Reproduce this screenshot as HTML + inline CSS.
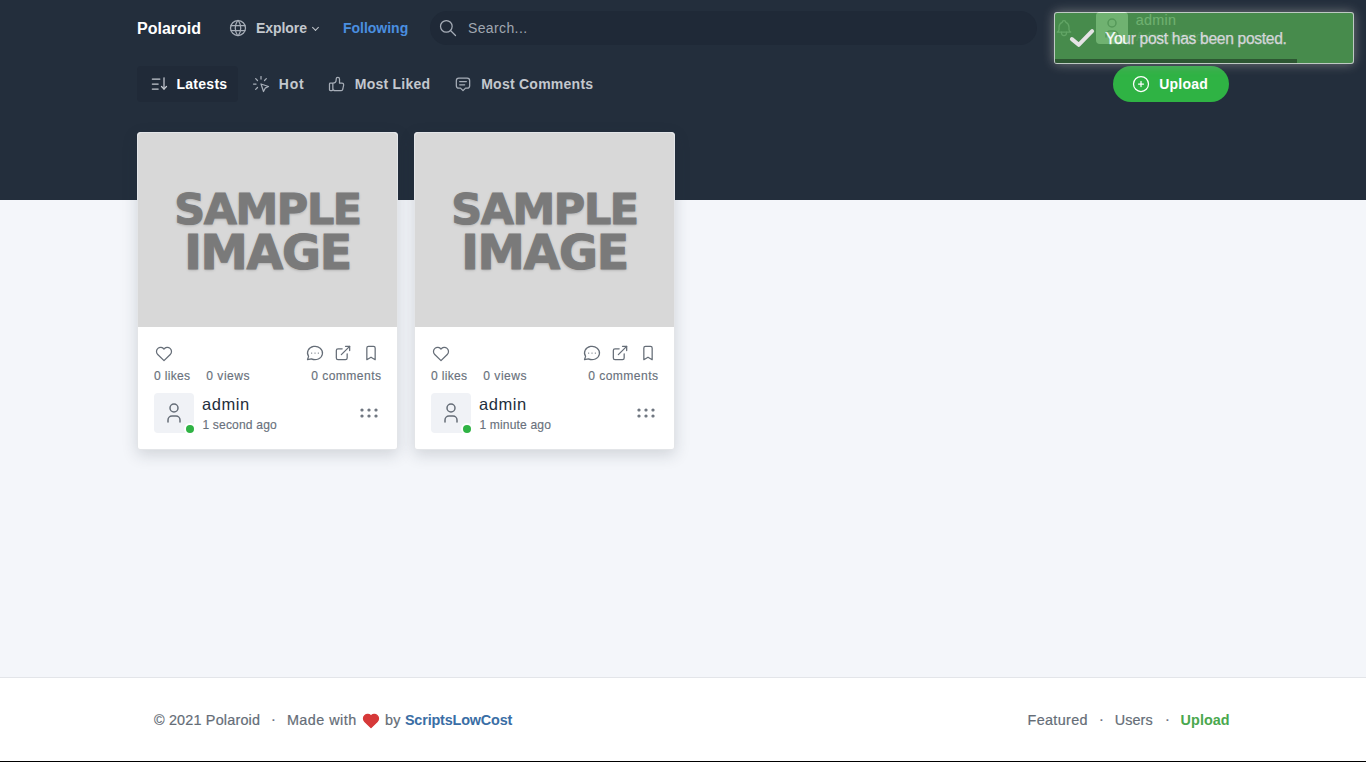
<!DOCTYPE html>
<html lang="en">
<head>
<meta charset="utf-8">
<title>Polaroid</title>
<style>
*{box-sizing:border-box;margin:0;padding:0}
html,body{width:1366px;height:762px;overflow:hidden}
body{position:relative;background:#f4f6fa;font-family:"Liberation Sans",Arial,sans-serif;font-size:14px;color:#232e3c;-webkit-font-smoothing:antialiased}
a{text-decoration:none;color:inherit}
.abs{position:absolute}
.t{position:absolute;white-space:nowrap;line-height:1}
svg.ic{position:absolute;fill:none;stroke:currentColor;stroke-width:1.5;stroke-linecap:round;stroke-linejoin:round}
.hdr{position:absolute;left:0;top:0;width:1366px;height:200px;background:#232e3c}
.nav-t{font-weight:700;font-size:14px;color:#c3c8ce}
.search{position:absolute;left:430px;top:11px;width:607px;height:34px;border-radius:17px;background:#1f2937}
.active-bg{position:absolute;left:137px;top:66px;width:101px;height:36px;border-radius:4px;background:#202a38}
.upload-btn{position:absolute;left:1113px;top:66px;width:116px;height:36px;border-radius:18px;background:#2fb344;color:#fff}
.card{position:absolute;top:132px;width:261px;height:318px;background:#fff;border:1px solid #e3e5e8;border-radius:3px;box-shadow:0 5px 15px rgba(35,46,60,.17);color:#656d77}
.card .img{position:absolute;left:0;top:0;width:259px;height:194px;background:#d8d8d8;border-radius:3px 3px 0 0;overflow:hidden}
.smp{position:absolute;left:0;width:259px;text-align:center;font-family:"DejaVu Sans","Liberation Sans",sans-serif;font-weight:700;line-height:1;color:#7a7a7a;-webkit-text-stroke:1px #7a7a7a;text-shadow:0 1px 3px rgba(0,0,0,.25);white-space:nowrap}
.s1{font-size:42.9px;letter-spacing:-1.4px;top:55px}
.s2{font-size:47.5px;letter-spacing:-1.3px;top:96px}
.sm{font-size:12.1px;color:#69717c;-webkit-text-stroke:.15px}
.avatar{position:absolute;width:40px;height:40px;border-radius:4px;background:#f0f2f6;color:#656d77}
.dot{position:absolute;right:0;bottom:0;width:8px;height:8px;border-radius:50%;background:#2fb344;box-shadow:0 0 0 2px #fff}
.footer{position:absolute;left:0;top:677px;width:1366px;height:84px;background:#fff;border-top:1px solid #e3e5e9;color:#656d77;font-size:14.4px;-webkit-text-stroke:.2px}
.blackline{position:absolute;left:0;top:761px;width:1366px;height:1px;background:#000}
.toast{position:absolute;left:1054px;top:12px;width:300px;height:52px;border-radius:3px;background:#51a351;opacity:.8;box-shadow:0 0 12px rgba(153,153,153,.88);border:1px solid rgba(255,255,255,.85);color:#fff}
.toast .prog{position:absolute;left:0;bottom:0;height:4px;width:241.7px;background:#000;opacity:.4}
/*FIT*/
#brand{letter-spacing:0.00px;margin-left:-0.0px}
#explore{letter-spacing:-0.05px;margin-left:-0.1px}
#following{letter-spacing:0.00px;margin-left:-0.1px}
#searchph{letter-spacing:0.39px;margin-left:-0.1px}
#latests{letter-spacing:0.28px;margin-left:-0.6px}
#hot{letter-spacing:0.73px;margin-left:-0.2px}
#mliked{letter-spacing:0.23px;margin-left:-0.2px}
#mcomm{letter-spacing:0.25px;margin-left:0.2px}
#uploadt{letter-spacing:0.19px;margin-left:0.3px}
#c1 .likes{letter-spacing:0.29px;margin-left:0.1px}
#c1 .views{letter-spacing:0.49px;margin-left:0.3px}
#c1 .comms{letter-spacing:0.42px;margin-left:-0.7px}
#c1 .cname{letter-spacing:0.54px;margin-left:0.0px}
#c1 .ago{letter-spacing:0.16px;margin-left:0.4px}
#c2 .likes{letter-spacing:0.29px;margin-left:0.1px}
#c2 .views{letter-spacing:0.49px;margin-left:0.3px}
#c2 .comms{letter-spacing:0.42px;margin-left:-0.7px}
#c2 .cname{letter-spacing:0.55px;margin-left:0.0px}
#c2 .ago{letter-spacing:0.14px;margin-left:0.4px}
#f1{letter-spacing:0.19px;margin-left:-0.1px}
#f2{letter-spacing:0.46px;margin-left:-1.1px}
#f3{letter-spacing:0.39px;margin-left:-0.1px}
#f4{letter-spacing:-0.16px;margin-left:-0.1px}
#f5{letter-spacing:0.34px;margin-left:-0.5px}
#f6{letter-spacing:0.07px;margin-left:-0.2px}
#f7{letter-spacing:0.05px;margin-left:-0.4px}
#uname{letter-spacing:0.25px;margin-left:-0.3px}
/*ENDFIT*/
</style>
</head>
<body>

<!-- ===== dark header ===== -->
<header class="hdr">
  <a class="t" id="brand" style="left:137px;top:21px;font-size:16px;font-weight:700;color:#fff">Polaroid</a>

  <svg class="ic" style="left:228px;top:18px;color:#a7aeb8" width="20" height="20" viewBox="0 0 24 24"><circle cx="12" cy="12" r="9"/><path d="M3.6 9h16.8"/><path d="M3.6 15h16.8"/><path d="M11.5 3a17 17 0 0 0 0 18"/><path d="M12.5 3a17 17 0 0 1 0 18"/></svg>
  <a class="t nav-t" id="explore" style="left:256px;top:21px">Explore</a>
  <span class="abs" style="left:313px;top:25px;width:5px;height:5px;border-left:1px solid #c3c8ce;border-bottom:1px solid #c3c8ce;transform:rotate(-45deg)"></span>
  <a class="t nav-t" id="following" style="left:343px;top:21px;color:#4a8fe0">Following</a>

  <div class="search">
    <svg class="ic" style="left:8px;top:7px;color:#a6adb7" width="20" height="20" viewBox="0 0 24 24"><circle cx="10" cy="10" r="7"/><path d="M21 21l-6 -6"/></svg>
    <span class="t" id="searchph" style="left:38px;top:10px;font-size:14px;color:#a0a7b1">Search...</span>
  </div>

  <!-- right: bell, avatar, user -->
  <svg class="ic" style="left:1054px;top:17.5px;color:#a7aeb8" width="20" height="20" viewBox="0 0 24 24"><path d="M10 5a2 2 0 0 1 4 0a7 7 0 0 1 4 6v3a4 4 0 0 0 2 3h-16a4 4 0 0 0 2 -3v-3a7 7 0 0 1 4 -6"/><path d="M9 17v1a3 3 0 0 0 6 0v-1"/></svg>
  <div class="avatar" style="left:1096px;top:12px;width:32px;height:32px;background:#f0f2f6">
    <svg class="ic" style="left:4px;top:4px" width="24" height="24" viewBox="0 0 24 24"><circle cx="12" cy="7" r="4"/><path d="M6 21v-2a4 4 0 0 1 4 -4h4a4 4 0 0 1 4 4v2"/></svg>
  </div>
  <span class="t" id="uname" style="left:1136px;top:12.7px;font-size:14.4px;color:#e8eaed">admin</span>
  <span class="t" id="urole" style="left:1136px;top:31px;font-size:12px;color:#6c7683">Administrator</span>

  <!-- sub nav -->
  <div class="active-bg"></div>
  <svg class="ic" style="left:149px;top:74px;color:#c4c9d0" width="20" height="20" viewBox="0 0 24 24"><path d="M4 6l9 0"/><path d="M4 12l7 0"/><path d="M4 18l7 0"/><path d="M15 15l3 3l3 -3"/><path d="M18 4.500l0 13.500"/></svg>
  <a class="t nav-t" id="latests" style="left:177px;top:77px;color:#fff">Latests</a>

  <svg class="ic" style="left:251px;top:74px;color:#a7aeb8" width="20" height="20" viewBox="0 0 24 24"><path d="M3 12l3 0"/><path d="M12 3l0 3"/><path d="M7.8 7.8l-2.2 -2.2"/><path d="M16.2 7.8l2.2 -2.2"/><path d="M7.8 16.2l-2.2 2.2"/><path d="M12 12l9 3l-4 2l-2 4l-3 -9"/></svg>
  <a class="t nav-t" id="hot" style="left:279px;top:77px">Hot</a>

  <svg class="ic" style="left:327px;top:74px;color:#a7aeb8" width="20" height="20" viewBox="0 0 24 24"><path d="M7 11v8a1 1 0 0 1 -1 1h-2a1 1 0 0 1 -1 -1v-7a1 1 0 0 1 1 -1h3a4 4 0 0 0 4 -4v-1a2 2 0 0 1 4 0v5h3a2 2 0 0 1 2 2l-1 5a2 3 0 0 1 -2 2h-7a3 3 0 0 1 -3 -3"/></svg>
  <a class="t nav-t" id="mliked" style="left:355px;top:77px">Most Liked</a>

  <svg class="ic" style="left:453px;top:74px;color:#a7aeb8" width="20" height="20" viewBox="0 0 24 24"><path d="M12 20l-3 -3h-2a3 3 0 0 1 -3 -3v-6a3 3 0 0 1 3 -3h10a3 3 0 0 1 3 3v6a3 3 0 0 1 -3 3h-2l-3 3"/><path d="M8 9l8 0"/><path d="M8 13l6 0"/></svg>
  <a class="t nav-t" id="mcomm" style="left:481px;top:77px">Most Comments</a>

  <a class="upload-btn">
    <svg class="ic" style="left:18px;top:8px" width="20" height="20" viewBox="0 0 24 24"><circle cx="12" cy="12" r="9"/><path d="M9 12l6 0"/><path d="M12 9l0 6"/></svg>
    <span class="t" id="uploadt" style="left:46px;top:11px;font-size:14px;font-weight:700">Upload</span>
  </a>
</header>

<main>
<article class="card" id="c1" style="left:137px">
  <div class="img">
    <span class="smp s1">SAMPLE</span>
    <span class="smp s2">IMAGE</span>
  </div>
  <svg class="ic" style="left:16px;top:211px" width="20" height="20" viewBox="0 0 24 24"><path d="M19.5 12.572l-7.500 7.428l-7.500 -7.428m0 0a5 5 0 1 1 7.500 -6.566a5 5 0 1 1 7.500 6.572"/></svg>
  <svg class="ic" style="left:167px;top:210px" width="20" height="20" viewBox="0 0 24 24"><path d="M3 20l1.300 -3.900a9 8 0 1 1 3.400 2.900l-4.700 1"/><path d="M12 12l0 .01"/><path d="M8 12l0 .01"/><path d="M16 12l0 .01"/></svg>
  <svg class="ic" style="left:195px;top:210px" width="20" height="20" viewBox="0 0 24 24"><path d="M11 7h-5a2 2 0 0 0 -2 2v9a2 2 0 0 0 2 2h9a2 2 0 0 0 2 -2v-5"/><path d="M10 14l10 -10"/><path d="M15 4l5 0l0 5"/></svg>
  <svg class="ic" style="left:223px;top:210px" width="20" height="20" viewBox="0 0 24 24"><path d="M9 4h6a2 2 0 0 1 2 2v14l-5 -3l-5 3v-14a2 2 0 0 1 2 -2"/></svg>
  <span class="t sm likes" style="left:16px;top:237px">0 likes</span>
  <span class="t sm views" style="left:68px;top:237px">0 views</span>
  <span class="t sm comms" style="left:174px;top:237px">0 comments</span>
  <div class="avatar" style="left:16px;top:260px">
    <svg class="ic" style="left:8px;top:8px" width="24" height="24" viewBox="0 0 24 24"><circle cx="12" cy="7" r="4"/><path d="M6 21v-2a4 4 0 0 1 4 -4h4a4 4 0 0 1 4 4v2"/></svg>
    <span class="dot"></span>
  </div>
  <span class="t cname" style="left:64px;top:263px;font-size:16.5px;color:#232e3c">admin</span>
  <span class="t sm ago" style="left:64px;top:286px">1 second ago</span>
  <svg class="ic" style="left:219px;top:268px;stroke-width:1.2;color:#5f6772" width="24" height="24" viewBox="0 0 24 24"><circle cx="5" cy="9" r="1"/><circle cx="5" cy="15" r="1"/><circle cx="12" cy="9" r="1"/><circle cx="12" cy="15" r="1"/><circle cx="19" cy="9" r="1"/><circle cx="19" cy="15" r="1"/></svg>
</article>
<article class="card" id="c2" style="left:414px">
  <div class="img">
    <span class="smp s1">SAMPLE</span>
    <span class="smp s2">IMAGE</span>
  </div>
  <svg class="ic" style="left:16px;top:211px" width="20" height="20" viewBox="0 0 24 24"><path d="M19.5 12.572l-7.500 7.428l-7.500 -7.428m0 0a5 5 0 1 1 7.500 -6.566a5 5 0 1 1 7.500 6.572"/></svg>
  <svg class="ic" style="left:167px;top:210px" width="20" height="20" viewBox="0 0 24 24"><path d="M3 20l1.300 -3.900a9 8 0 1 1 3.400 2.900l-4.700 1"/><path d="M12 12l0 .01"/><path d="M8 12l0 .01"/><path d="M16 12l0 .01"/></svg>
  <svg class="ic" style="left:195px;top:210px" width="20" height="20" viewBox="0 0 24 24"><path d="M11 7h-5a2 2 0 0 0 -2 2v9a2 2 0 0 0 2 2h9a2 2 0 0 0 2 -2v-5"/><path d="M10 14l10 -10"/><path d="M15 4l5 0l0 5"/></svg>
  <svg class="ic" style="left:223px;top:210px" width="20" height="20" viewBox="0 0 24 24"><path d="M9 4h6a2 2 0 0 1 2 2v14l-5 -3l-5 3v-14a2 2 0 0 1 2 -2"/></svg>
  <span class="t sm likes" style="left:16px;top:237px">0 likes</span>
  <span class="t sm views" style="left:68px;top:237px">0 views</span>
  <span class="t sm comms" style="left:174px;top:237px">0 comments</span>
  <div class="avatar" style="left:16px;top:260px">
    <svg class="ic" style="left:8px;top:8px" width="24" height="24" viewBox="0 0 24 24"><circle cx="12" cy="7" r="4"/><path d="M6 21v-2a4 4 0 0 1 4 -4h4a4 4 0 0 1 4 4v2"/></svg>
    <span class="dot"></span>
  </div>
  <span class="t cname" style="left:64px;top:263px;font-size:16.5px;color:#232e3c">admin</span>
  <span class="t sm ago" style="left:64px;top:286px">1 minute ago</span>
  <svg class="ic" style="left:219px;top:268px;stroke-width:1.2;color:#5f6772" width="24" height="24" viewBox="0 0 24 24"><circle cx="5" cy="9" r="1"/><circle cx="5" cy="15" r="1"/><circle cx="12" cy="9" r="1"/><circle cx="12" cy="15" r="1"/><circle cx="19" cy="9" r="1"/><circle cx="19" cy="15" r="1"/></svg>
</article>
</main>

<footer class="footer">
  <span class="t" id="f1" style="left:154px;top:35px">© 2021 Polaroid</span>
  <span class="t" id="fd1" style="left:271px;top:33.5px">·</span>
  <span class="t" id="f2" style="left:288px;top:35px">Made with</span>
  <svg class="abs" style="left:361px;top:33px" width="20" height="20" viewBox="0 0 24 24"><path fill="#d63939" stroke="#d63939" stroke-width="1.5" stroke-linejoin="round" d="M19.5 12.572l-7.500 7.428l-7.500 -7.428m0 0a5 5 0 1 1 7.500 -6.566a5 5 0 1 1 7.500 6.572"/></svg>
  <span class="t" id="f3" style="left:385px;top:35px">by</span>
  <a class="t" id="f4" style="left:405px;top:35px;font-weight:700;color:#3a6ea5;-webkit-text-stroke:0">ScriptsLowCost</a>
  <a class="t" id="f5" style="left:1028px;top:35px">Featured</a>
  <span class="t" id="fd2" style="left:1099px;top:33.5px">·</span>
  <a class="t" id="f6" style="left:1115px;top:35px">Users</a>
  <span class="t" id="fd3" style="left:1165px;top:33.5px">·</span>
  <a class="t" id="f7" style="left:1181px;top:35px;font-weight:700;color:#4aa84e;-webkit-text-stroke:0">Upload</a>
</footer>
<div class="blackline"></div>

<div class="toast" role="alert">
  <span class="t" id="tmsg" style="left:50.3px;top:17.9px;font-size:15.6px;letter-spacing:-0.31px;-webkit-text-stroke:.25px #fff">Your post has been posted.</span>
  <div class="prog"></div>
</div>
<svg class="abs" style="left:1069px;top:26px;overflow:visible;opacity:.9" width="24" height="24" viewBox="0 0 24 24"><path d="M2.900 13.100L9.700 18.800L23.100 5.200" fill="none" stroke="#f6ecf6" stroke-width="4" stroke-linecap="round" stroke-linejoin="round"/></svg>

</body>
</html>
